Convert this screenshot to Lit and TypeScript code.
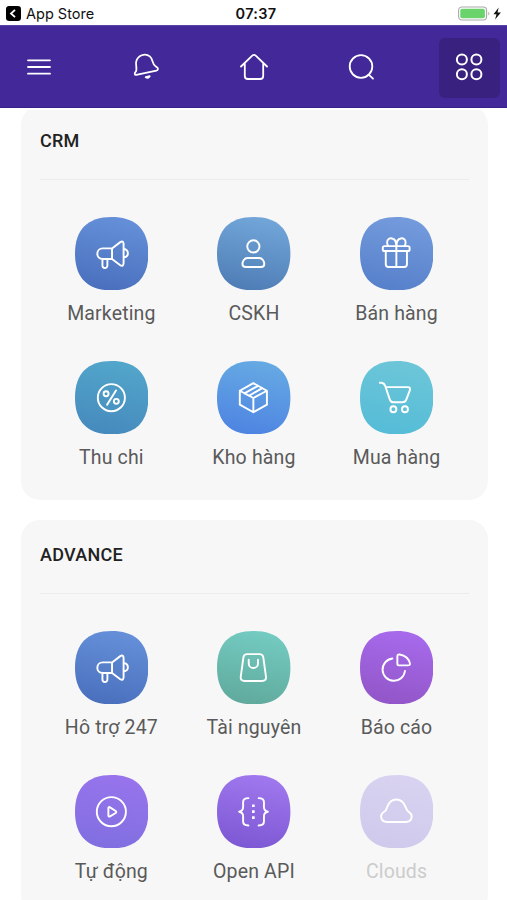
import { LitElement, html, css, svg, TemplateResult } from "lit";
import { customElement, property } from "lit/decorators.js";

const SQUIRCLE =
  "M111 0C184 0 222 38 222 111S184 222 111 222 0 184 0 111 38 0 111 0Z";

// Glyphs share the 222 x 222 grid of the tile they sit on.
const glyphs: Record<string, TemplateResult> = {
  megaphone: svg`<path d="M112 95H84C62 95 62 127 84 127H112M112 95V127M112 95L137 76Q146 71 147 81V140Q146 151 137 146L112 127M147 96Q160 99 160 110T147 123M83 127V147A7.5 7.5 0 0 0 98 147V127"/>`,
  person: svg`<circle cx="110" cy="89" r="18.5"/><path d="M92 124H128C137 124 143 134 143 142Q143 151 133 151H87Q77 151 77 142C77 134 83 124 92 124Z"/>`,
  gift: svg`<rect x="69" y="88" width="81" height="15" rx="5"/><path d="M78 103V143Q78 151 86 151H134Q142 151 142 143V103M110 88V151M109 88C112 60 82 58 82 77Q82 84 86 88M111 88C108 60 138 58 138 77Q138 84 134 88"/>`,
  percent: svg`<circle cx="110" cy="111" r="41"/><circle cx="94" cy="99" r="7.5"/><circle cx="125" cy="122" r="7.5"/><path d="M124 89L97 132"/>`,
  box: svg`<path d="M110 67L151 90V132L110 155L69 132V90ZM69 90L110 112L151 90M110 112V155M83 98L124 75M97 105L137 82M83 98L97 105"/>`,
  cart: svg`<path d="M60 66H65Q73 67 76 75L90 116Q93 125 102 125H128Q137 125 140 117L151 88Q153 79 145 79H78"/><circle cx="101" cy="146" r="9"/><circle cx="136" cy="146" r="9"/>`,
  bag: svg`<path d="M91 70H129Q138 70 140 79L148 137Q150 151 136 151H84Q70 151 72 137L80 79Q82 70 91 70ZM96 87V98A14 14 0 0 0 124 98V87"/>`,
  pie: svg`<path d="M98 83A34 34 0 1 0 136 121M113 77Q113 70 120 71Q146 76 151 98Q152 104 145 104H117Q113 104 113 100Z"/>`,
  play: svg`<circle cx="110" cy="111" r="44"/><path d="M101 100V122Q101 127 106 125L123 115Q127 112 123 109L106 98Q101 95 101 100Z"/>`,
  braces: svg`<path d="M95 70Q79 70 79 82V97Q79 109 67 111Q79 113 79 125V141Q79 153 95 153M126 70Q142 70 142 82V97Q142 109 154 111Q142 113 142 125V141Q142 153 126 153"/><path class="solid" d="M106 89h8v8h-8zM106 107h8v8h-8zM106 125h8v8h-8z"/>`,
  cloud: svg`<path d="M81 142H139C157 142 162 122 149 113Q142 108 138 97C132 81 122 74 110 74S88 81 82 97Q80 107 72 112C58 121 63 142 81 142Z"/>`,
};

interface App {
  label: string;
  glyph: string;
  from: string;
  to: string;
  disabled?: boolean;
}

const groups: { title: string; apps: App[] }[] = [
  {
    title: "CRM",
    apps: [
      { label: "Marketing", glyph: "megaphone", from: "#6590d9", to: "#4a70bd" },
      { label: "CSKH", glyph: "person", from: "#72a6d9", to: "#4e7db5" },
      { label: "Bán hàng", glyph: "gift", from: "#749bdc", to: "#5680cb" },
      { label: "Thu chi", glyph: "percent", from: "#52a6cb", to: "#468abd" },
      { label: "Kho hàng", glyph: "box", from: "#66aae3", to: "#4e84e2" },
      { label: "Mua hàng", glyph: "cart", from: "#6dc6d8", to: "#55bcd7" },
    ],
  },
  {
    title: "ADVANCE",
    apps: [
      { label: "Hô trợ 247", glyph: "megaphone", from: "#6590d9", to: "#4a70bd" },
      { label: "Tài nguyên", glyph: "bag", from: "#74cbc1", to: "#60aa9d" },
      { label: "Báo cáo", glyph: "pie", from: "#a76aec", to: "#9256c8" },
      { label: "Tự động", glyph: "play", from: "#9874ec", to: "#806fe0" },
      { label: "Open API", glyph: "braces", from: "#a078ee", to: "#7d58d4" },
      { label: "Clouds", glyph: "cloud", from: "#d9d3f1", to: "#cfc9ec", disabled: true },
    ],
  },
];

@customElement("status-bar")
class StatusBar extends LitElement {
  static styles = css`
    :host {
      display: grid;
      grid-template-columns: 1fr auto 1fr;
      align-items: center;
      height: 25px;
      padding: 2px 3px 0 6px;
      box-sizing: border-box;
      color: #111;
      font: 14.5px/20px Inter, sans-serif;
    }
    .back {
      display: flex;
      align-items: center;
      gap: 5px;
    }
    .time {
      font-weight: 600;
      letter-spacing: 0.3px;
      padding-left: 2px;
    }
    .power {
      justify-self: end;
      display: block;
    }
    .chip {
      display: block;
    }
  `;
  render() {
    return html`
      <div class="back">
        <svg class="chip" width="15" height="15" viewBox="0 0 15 15">
          <rect width="15" height="15" rx="3.2" fill="#000" />
          <path d="M9 3.8L5 7.5L9 11.2" fill="none" stroke="#fff" stroke-width="1.8" />
        </svg>
        <span>App Store</span>
      </div>
      <span class="time">07:37</span>
      <svg class="power" width="46" height="15" viewBox="0 0 46 15">
        <rect x="0.6" y="1" width="28" height="13" rx="3.4" fill="#fff" stroke="#aaa" stroke-width="1.1" />
        <rect x="2.3" y="2.7" width="24.6" height="9.6" rx="1.8" fill="#6bd36b" />
        <path d="M30.3 5.4Q32.5 7.5 30.3 9.6Z" fill="#aaa" />
        <path d="M40.7 1.4L35.5 8.2H38.5L37.1 13.6L42.9 6.5H39.5Z" fill="#111" />
      </svg>
    `;
  }
}

@customElement("nav-bar")
class NavBar extends LitElement {
  static styles = css`
    :host {
      display: grid;
      grid-template-columns: repeat(5, 107.6px);
      align-items: center;
      justify-content: center;
      justify-items: center;
      height: 85px;
      padding: 1px 0 0 0.8px;
      box-sizing: border-box;
      background: #422899;
      border-top: 1px solid #5a44a5;
      border-bottom: 2px solid #fff;
      box-shadow: inset 0 -1px #36208a;
    }
    .item {
      display: grid;
      place-items: center;
      width: 61px;
      height: 60px;
      border-radius: 6px;
    }
    .active {
      background: #392180;
    }
    .icon {
      display: block;
      fill: none;
      stroke: #fff;
      stroke-width: 1.8;
      stroke-linecap: round;
      stroke-linejoin: round;
    }
  `;
  render() {
    const icons = [
      svg`<path d="M5 8.3H27M5 15H27M5 21.7H27"/>`,
      svg`<path d="M5.2 22.8C3.6 23 3.3 21.2 4.4 20.1C7 17.4 4.2 13.2 5.2 9.5C6.7 3.4 14 .7 18.8 4.4C22.2 7 21.3 12.6 24.5 14.3L26.2 15.4C27.5 16.5 27 18.2 25.4 18.7Z"/><path d="M14.7 25.2Q17.4 26.9 18.8 24.2Z"/>`,
      svg`<path d="M3 14.5L14 3.8Q16 2 18 3.8L29 14.5M6.8 11V24Q6.8 27 9.8 27H22.2Q25.2 27 25.2 24V11"/>`,
      svg`<circle cx="15" cy="14.5" r="11.3"/><path d="M22.7 22.7L27 26.7"/>`,
      svg`<g stroke-width="2"><circle cx="7.9" cy="7.6" r="5"/><circle cx="22.4" cy="7.6" r="5"/><circle cx="7.9" cy="22.2" r="5"/><circle cx="22.4" cy="22.2" r="5"/></g>`,
    ];
    return icons.map(
      (icon, i) => html`
        <div class=${i === 4 ? "item active" : "item"}>
          <svg class="icon" width="31" height="31" viewBox="0 0 31 31">${icon}</svg>
        </div>
      `
    );
  }
}

@customElement("app-tile")
class AppTile extends LitElement {
  @property({ attribute: false }) app!: App;
  static styles = css`
    :host {
      display: flex;
      flex-direction: column;
      align-items: center;
      height: 144px;
    }
    .tile {
      display: block;
      flex: none;
      width: 73.4px;
      height: 73.4px;
    }
    .glyph {
      fill: none;
      stroke: #fff;
      stroke-width: 5.8;
      stroke-linecap: round;
      stroke-linejoin: round;
    }
    .solid {
      fill: #fff;
      stroke: none;
    }
    .label {
      margin-top: 11.6px;
      font: 19.5px/24px Roboto, sans-serif;
      letter-spacing: 0.15px;
      color: #5a5a5a;
      white-space: nowrap;
    }
    .muted {
      color: #ccc;
    }
  `;
  render() {
    const { label, glyph, from, to, disabled } = this.app;
    return html`
      <svg class="tile" viewBox="0 0 222 222">
        <defs>
          <linearGradient id="fill" x1="0.6" y1="0" x2="0.4" y2="1">
            <stop offset="0" stop-color=${from} />
            <stop offset="1" stop-color=${to} />
          </linearGradient>
        </defs>
        <path d=${SQUIRCLE} fill="url(#fill)" />
        <g class="glyph">${glyphs[glyph]}</g>
      </svg>
      <span class=${disabled ? "label muted" : "label"}>${label}</span>
    `;
  }
}

@customElement("app-root")
class AppRoot extends LitElement {
  static styles = css`
    :host {
      display: flex;
      flex-direction: column;
      height: 900px;
      overflow: hidden;
      background: #fff;
    }
    status-bar,
    nav-bar {
      flex: none;
    }
    .content {
      flex: 1;
      min-height: 0;
      overflow: hidden;
      padding: 0 19.5px 0 21px;
    }
    .card {
      box-sizing: border-box;
      height: 394px;
      padding: 0 19px;
      border-radius: 19px;
      background: #f7f7f7;
      margin-bottom: 20px;
    }
    .first {
      margin-top: -4px;
    }
    .title {
      margin: 0;
      box-sizing: border-box;
      height: 74px;
      padding-top: 23px;
      border-bottom: 1px solid #ececec;
      font: 500 18px/24px Roboto, sans-serif;
      letter-spacing: 0.25px;
      color: #222;
    }
    .grid {
      display: grid;
      grid-template-columns: repeat(3, 142.6px);
      justify-content: center;
      margin-left: -0.6px;
      padding-top: 37px;
    }
  `;
  render() {
    return html`
      <status-bar></status-bar>
      <nav-bar></nav-bar>
      <main class="content">
        ${groups.map(
          (group, i) => html`
            <section class=${i === 0 ? "card first" : "card"}>
              <h2 class="title">${group.title}</h2>
              <div class="grid">
                ${group.apps.map((app) => html`<app-tile .app=${app}></app-tile>`)}
              </div>
            </section>
          `
        )}
      </main>
    `;
  }
}
